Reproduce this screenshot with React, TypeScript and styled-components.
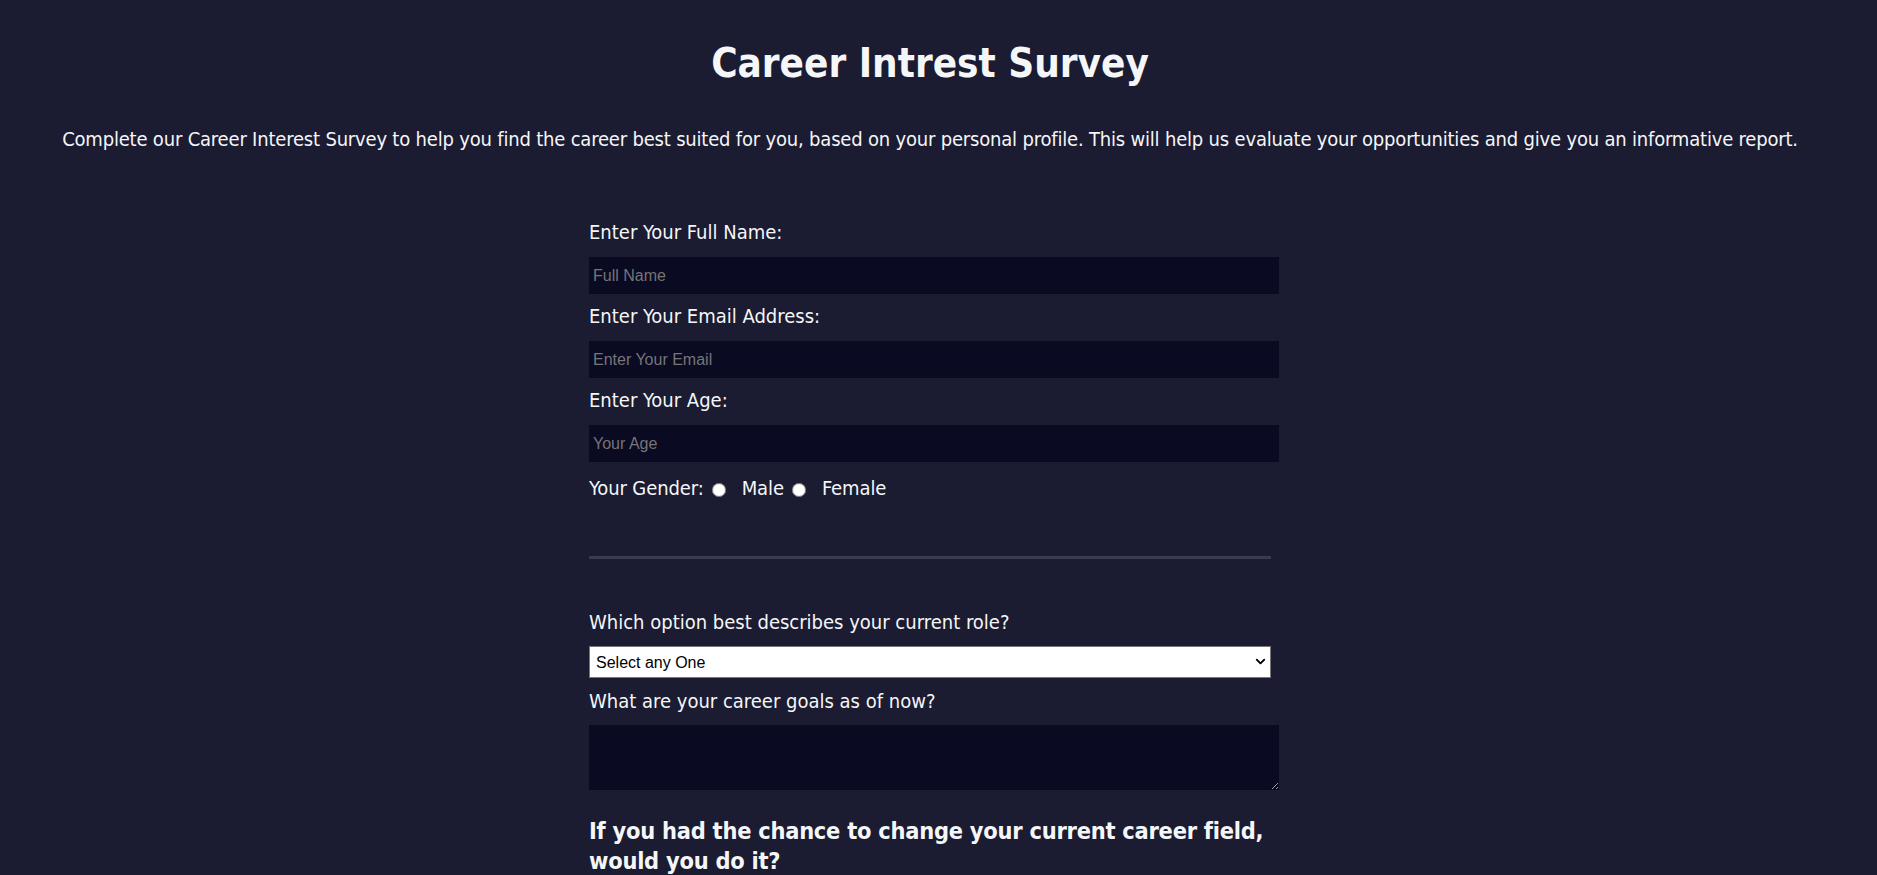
import React from "react";
import styled, { createGlobalStyle } from "styled-components";
import { ChevronDown } from "lucide-react";

const GlobalStyle = createGlobalStyle`
  html, body {
    margin: 0;
    padding: 0;
    background: #1b1b32;
    color: #f5f6f7;
    font-family: "DejaVu Sans Condensed", "DejaVu Sans", sans-serif;
    font-stretch: condensed;
    scrollbar-width: none;
  }
  ::-webkit-scrollbar { display: none; }
  * { box-sizing: border-box; }
`;

const Page = styled.main`
  display: flex;
  flex-direction: column;
  align-items: center;
  padding: 39px 17px 60px 0;
`;

const Title = styled.h1`
  margin: 0;
  font-size: 40px;
  line-height: 48px;
  font-weight: bold;
  text-align: center;
`;

const Description = styled.p`
  margin: 40px 0 0;
  font-size: 20px;
  line-height: 24px;
  letter-spacing: -0.19px;
  text-align: center;
  white-space: nowrap;
`;

const Form = styled.form`
  width: 682px;
  margin-top: 69px;
  display: flex;
  flex-direction: column;
`;

const Label = styled.label<{ $gap?: number; $top?: number }>`
  display: block;
  font-size: 20px;
  line-height: 24px;
  margin: ${(p) => p.$top ?? 0}px 0 ${(p) => p.$gap ?? 13}px;
`;

const TextInput = styled.input`
  width: 690px;
  height: 37px;
  margin: 0 0 10px;
  padding: 0 4px;
  border: none;
  outline: none;
  background: #0a0a23;
  color: #f5f6f7;
  font-family: "Liberation Sans", Arial, sans-serif;
  font-size: 16px;
  &::placeholder {
    color: #757575;
  }
`;

const GenderRow = styled.div`
  display: flex;
  align-items: center;
  margin-top: 4px;
  font-size: 20px;
  line-height: 24px;
  letter-spacing: -0.1px;
`;

const Radio = styled.input`
  width: 14px;
  height: 14px;
  margin: 3px 0 0 8px;
`;

const RadioLabel = styled.label`
  margin-left: 16px;
`;

const Divider = styled.div`
  width: 682px;
  height: 3px;
  margin-top: 56px;
  background: #3b3b4f;
`;

const SelectWrap = styled.div`
  position: relative;
  width: 682px;
  height: 32px;
`;

const Select = styled.select`
  appearance: none;
  width: 100%;
  height: 100%;
  margin: 0;
  padding: 0 28px 0 6px;
  background: #ffffff;
  color: #000000;
  border: 1px solid #767676;
  border-radius: 0;
  font-family: "Liberation Sans", Arial, sans-serif;
  font-size: 16px;
`;

const Chevron = styled(ChevronDown)`
  position: absolute;
  right: 3px;
  top: 8px;
  pointer-events: none;
  color: #000;
`;

const TextArea = styled.textarea`
  width: 690px;
  height: 65px;
  margin: 0;
  padding: 4px;
  border: none;
  outline: none;
  background: #0a0a23;
  color: #f5f6f7;
  font-family: "Liberation Sans", Arial, sans-serif;
  font-size: 16px;
  resize: vertical;
`;

const Question = styled.h3`
  width: 690px;
  margin: 26px 0 0;
  font-size: 23.4px;
  line-height: 30px;
  letter-spacing: -0.25px;
  font-weight: bold;
`;

const fields = [
  { id: "name", label: "Enter Your Full Name:", type: "text", placeholder: "Full Name" },
  { id: "email", label: "Enter Your Email Address:", type: "email", placeholder: "Enter Your Email" },
  { id: "age", label: "Enter Your Age:", type: "number", placeholder: "Your Age" },
];

export default function App() {
  return (
    <>
      <GlobalStyle />
      <Page>
        <Title>Career Intrest Survey</Title>
        <Description>
          Complete our Career Interest Survey to help you find the career best suited for you, based on your personal
          profile. This will help us evaluate your opportunities and give you an informative report.
        </Description>
        <Form onSubmit={(e) => e.preventDefault()}>
          {fields.map((f) => (
            <React.Fragment key={f.id}>
              <Label htmlFor={f.id}>{f.label}</Label>
              <TextInput id={f.id} type={f.type} placeholder={f.placeholder} />
            </React.Fragment>
          ))}
          <GenderRow>
            <span>Your Gender:</span>
            <Radio type="radio" name="gender" id="male" />
            <RadioLabel htmlFor="male">Male</RadioLabel>
            <Radio type="radio" name="gender" id="female" />
            <RadioLabel htmlFor="female">Female</RadioLabel>
          </GenderRow>
          <Divider />
          <Label htmlFor="role" $top={51} $gap={12}>
            Which option best describes your current role?
          </Label>
          <SelectWrap>
            <Select id="role" defaultValue="">
              <option value="" disabled>
                Select any One
              </option>
              <option value="student">Student</option>
              <option value="job">Full Time Job</option>
              <option value="learner">Full Time Learner</option>
              <option value="other">Other</option>
            </Select>
            <Chevron size={15} strokeWidth={3} />
          </SelectWrap>
          <Label htmlFor="goals" $top={11} $gap={12}>
            What are your career goals as of now?
          </Label>
          <TextArea id="goals" />
          <Question>If you had the chance to change your current career field, would you do it?</Question>
        </Form>
      </Page>
    </>
  );
}
